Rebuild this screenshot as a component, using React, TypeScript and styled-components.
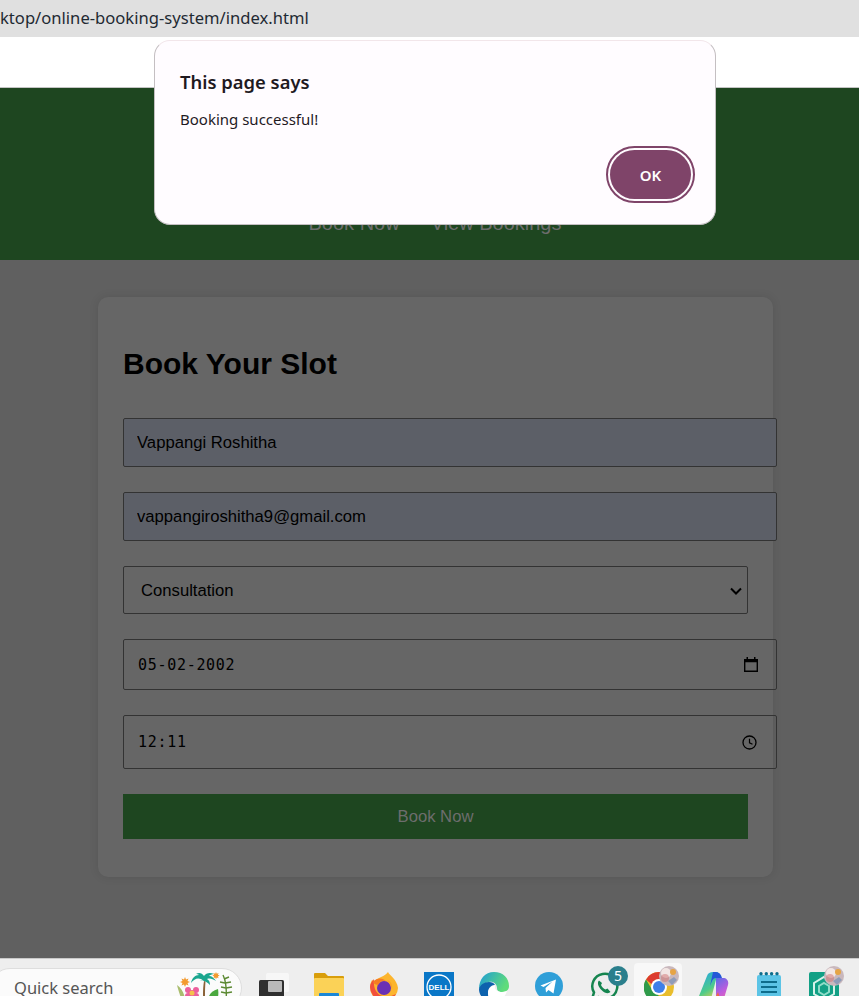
import React, { FC, ReactNode } from 'react';
import styled, { createGlobalStyle } from 'styled-components';

const GlobalStyle = createGlobalStyle`
  html, body {
    margin: 0;
    padding: 0;
    background: #606060;
  }
  * {
    box-sizing: border-box;
  }
`;

const Screen = styled.div`
  position: relative;
  width: 859px;
  height: 996px;
  overflow: hidden;
  display: flex;
  flex-direction: column;
  font-family: 'Liberation Sans', Arial, sans-serif;
`;

const AddressBar = styled.div`
  height: 37px;
  flex: none;
  background: #e0e0e0;
  color: #1f2a33;
  font: 16.6px/35px 'Noto Sans', 'Open Sans', sans-serif;
  white-space: nowrap;
`;

const TopStrip = styled.div`
  height: 51px;
  flex: none;
  background: #fff;
  border-bottom: 1px solid #c4c4c4;
`;

const Header = styled.header`
  height: 172px;
  flex: none;
  background: #1e4620;
  display: flex;
  justify-content: center;
  align-items: flex-end;
  gap: 31px;
  padding: 0 0 25px 11px;
`;

const NavLink = styled.a`
  color: #6d6d6d;
  font-size: 20px;
  line-height: 23px;
  text-decoration: none;
`;

const Main = styled.main`
  flex: 1;
  min-height: 0;
  background: #606060;
  padding: 37px 0 0 98px;
`;

const Card = styled.section`
  width: 675px;
  height: 580px;
  background: #666;
  border-radius: 10px;
  box-shadow: 0 0 10px rgba(0, 0, 0, 0.1);
  padding: 49px 25px 0;
`;

const Title = styled.h2`
  margin: 0 0 37px;
  color: #000;
  font-size: 30px;
  line-height: 35px;
  font-weight: 700;
`;

const Form = styled.form`
  display: flex;
  flex-direction: column;
  gap: 25px;
`;

const TextField = styled.input<{ $autofill?: boolean }>`
  display: block;
  width: 654px;
  height: 49px;
  padding: 0 13px;
  border: 1px solid #333;
  border-radius: 2px;
  outline: none;
  background: ${p => (p.$autofill ? '#5c5f67' : '#666')};
  color: #000;
  font: 16.67px 'Liberation Sans', Arial, sans-serif;
`;

const SelectBox = styled.div`
  width: 625px;
  height: 48px;
  padding: 1px 5px 0 17px;
  border: 1px solid #333;
  border-radius: 2px;
  display: flex;
  align-items: center;
  justify-content: space-between;
  color: #000;
  font-size: 16.67px;
`;

const PickerField = styled.div<{ $height: number; $iconGap: number }>`
  width: 654px;
  height: ${p => p.$height}px;
  padding: 0 ${p => p.$iconGap}px 0 14px;
  border: 1px solid #333;
  border-radius: 2px;
  display: flex;
  align-items: center;
  justify-content: space-between;
  color: #000;
  font: 15px 'DejaVu Sans Mono', 'Liberation Mono', monospace;
  letter-spacing: 0.7px;
`;

const SubmitButton = styled.button`
  width: 625px;
  height: 45px;
  border: none;
  background: #1e4620;
  color: #6d6d6d;
  font: 16.67px 'Liberation Sans', Arial, sans-serif;
  padding: 0;
`;

const Dialog = styled.div`
  position: absolute;
  left: 154px;
  top: 40px;
  width: 562px;
  height: 185px;
  background: #fffcff;
  border: 1px solid #f2e6ea;
  border-bottom-color: #c4bfc2;
  border-right-color: #c4bfc2;
  border-left-color: #c4bfc2;
  border-radius: 16px;
  padding: 29px 25px 0;
  font-family: 'Noto Sans', 'Open Sans', sans-serif;
  color: #1f1a1f;
`;

const DialogTitle = styled.div`
  font-size: 18.4px;
  line-height: 24px;
  font-weight: 600;
`;

const DialogText = styled.div`
  margin-top: 15px;
  font-size: 15px;
  line-height: 20px;
`;

const DialogActions = styled.div`
  position: absolute;
  right: 24px;
  bottom: 25px;
`;

const OkButton = styled.button`
  display: block;
  width: 81px;
  height: 49px;
  border: none;
  border-radius: 25px;
  background: #7f4469;
  outline: 2px solid #7f4469;
  outline-offset: 2px;
  color: #fff;
  font: 600 15px 'Noto Sans', 'Open Sans', sans-serif;
  padding: 0;
`;

const Taskbar = styled.footer`
  height: 38px;
  flex: none;
  background: #eeeeee;
  border-top: 1px solid #c9c9c9;
  display: flex;
  overflow: hidden;
`;

const SearchPill = styled.div`
  width: 252px;
  height: 40px;
  flex: none;
  margin: 9px 4px 0 -10px;
  padding: 7px 0 0 23px;
  background: #fbfbfb;
  border: 1px solid #dedede;
  border-radius: 20px;
  display: flex;
  justify-content: space-between;
  color: #555;
  font: 16.5px/24px 'Noto Sans', 'Open Sans', sans-serif;
`;

const Tile = styled.div<{ $active?: boolean }>`
  position: relative;
  width: 55px;
  flex: none;
  height: 45px;
  display: flex;
  justify-content: center;
  padding-top: 13px;
  &::before {
    content: '';
    display: ${p => (p.$active ? 'block' : 'none')};
    position: absolute;
    left: 3px;
    right: 4px;
    top: 4px;
    bottom: 0;
    background: #f8f8f8;
    border-radius: 4px;
  }
  svg {
    position: relative;
  }
`;

const Badge = styled.span`
  position: absolute;
  left: 32px;
  top: 7px;
  width: 20px;
  height: 20px;
  border-radius: 50%;
  background: #2b7f8c;
  color: #fff;
  font: 14px/20px 'Noto Sans', sans-serif;
  text-align: center;
`;

const DotHolder = styled.span`
  position: absolute;
  left: 28px;
  top: 7px;
  width: 20px;
  height: 20px;
  line-height: 0;
`;

const ArtHolder = styled.span`
  flex: none;
  margin: -4px 6px 0 0;
  line-height: 0;
`;

const Chevron: FC = () => (
  <svg width="12" height="8" viewBox="0 0 12 8">
    <path d="M1 1.500 6 6.500l5-5" fill="none" stroke="#000" strokeWidth="2" />
  </svg>
);

const CalendarIcon: FC = () => (
  <svg width="14" height="15" viewBox="0 0 14 15">
    <path d="M2.500 0h1.500v2h6V0h1.500v2H14v13H0V2h2.500z M1.400 5.200v8.400h11.200V5.200z" fill="#000" fillRule="evenodd" />
  </svg>
);

const ClockIcon: FC = () => (
  <svg width="15" height="15" viewBox="0 0 15 15">
    <circle cx="7.500" cy="7.500" r="6.500" fill="none" stroke="#000" strokeWidth="1.300" />
    <path d="M7.500 3.800v4l3 1.500" fill="none" stroke="#000" strokeWidth="1.200" />
  </svg>
);

const IslandArt: FC = () => (
  <svg width="60" height="30" viewBox="0 0 60 30">
    <path d="M2 13c4 3 7 7 8 14H6C5 22 3 18 2 13z" fill="#a9bd6e" />
    <path d="M28 27c0-7 0-12 1-18l1.500.5c-.5 6-.5 11-.5 17.500z" fill="#8a6238" />
    <path d="M29 9C24 5 20 6 16 11c1-5 4-8 8-8-1-1-2-1-3-1 3-2 6-1 8 2 2-3 6-4 10-2-2 0-4 1-5 2 3 0 5 2 7 5-3-2-6-3-9-2 2 1 3 3 3 6-3-3-6-5-10-4z" fill="#1ba78f" />
    <path d="M33 30c0-7 3-11 10-13 1 6 0 11-4 13z" fill="#4aa83e" />
    <g fill="none" stroke="#5c8a33" strokeWidth="1.400">
      <path d="M48 3c3 6 4 14 3 27" />
      <path d="M49 7l5-2M50 11l-5-1M50 11l6-1M51 16l-5-1M51 16l6-1M51 21l-5-1M51 21l6-1" />
    </g>
    <circle cx="13" cy="18" r="3" fill="#ec5f9c" />
    <circle cx="21" cy="18" r="3" fill="#ec5f9c" />
    <circle cx="13" cy="24" r="3" fill="#ec5f9c" />
    <circle cx="21" cy="24" r="3" fill="#ec5f9c" />
    <rect x="13" y="18" width="8" height="6" fill="#ec5f9c" />
    <circle cx="17" cy="21" r="2.500" fill="#f4c24c" />
    <path d="M10 5l1 2.500 2.500-1-1 2.500 2.500 1-2.500 1 1 2.500-2.500-1-1 2.500-1-2.500-2.500 1 1-2.500-2.500-1 2.500-1-1-2.500 2.500 1z" fill="#f39a2e" />
    <path d="M41 0l.8 1.700 1.800-.7-.7 1.800 1.700.8-1.700.8.7 1.800-1.800-.7-.8 1.700-.8-1.700-1.800.7.7-1.800-1.700-.8 1.700-.8-.7-1.800 1.800.7z" fill="#f39a2e" />
  </svg>
);

const TaskViewIcon: FC = () => (
  <svg width="30" height="30" viewBox="0 0 30 30">
    <rect x="7" y="1" width="23" height="19" rx="1.500" fill="#f7f7f7" />
    <rect x="0" y="8" width="25" height="22" rx="1.500" fill="#2f2f2f" />
    <rect x="9" y="9" width="14" height="11" rx="1" fill="#b9b9b9" />
  </svg>
);

const FolderIcon: FC = () => (
  <svg width="30" height="30" viewBox="0 0 30 30">
    <path d="M0 2a1 1 0 0 1 1-1h10l3 3h15a1 1 0 0 1 1 1v4H0z" fill="#d99e0b" />
    <rect x="0" y="6" width="30" height="24" rx="1" fill="#fbd257" />
    <rect x="5" y="21" width="20" height="9" rx="1" fill="#1b87d6" />
  </svg>
);

const FirefoxIcon: FC = () => (
  <svg width="30" height="30" viewBox="0 0 30 30">
    <path d="M19 0c1 3 9 7 10 16a14 14 0 1 1-28-1c0-3 1-5 2-7 1 1 2 1 4 0 3-3 8-3 12-8z" fill="#fcb52e" />
    <path d="M1 15a14 14 0 0 0 26 7c-4 2-9 4-14 2C7 22 4 15 5 7 3 9 1 12 1 15z" fill="#f2503c" />
    <circle cx="15" cy="16" r="7" fill="#6a30b4" />
    <path d="M4 10c4-5 10-4 13-1-3-1-6 0-7 3-2 2-5 0-6-2z" fill="#f57d22" />
    <path d="M18 8c4 1 6 5 5 9-1-3-3-6-5-9z" fill="#f9a22a" />
  </svg>
);

const DellIcon: FC = () => (
  <svg width="30" height="30" viewBox="0 0 30 30">
    <rect width="30" height="30" fill="#0a77c7" />
    <circle cx="15" cy="15" r="12" fill="none" stroke="#fff" strokeWidth="1.300" />
    <text x="15" y="18" fill="#fff" fontSize="8" fontWeight="700" fontFamily="Liberation Sans" textAnchor="middle">DELL</text>
  </svg>
);

const EdgeIcon: FC = () => (
  <svg width="30" height="30" viewBox="0 0 30 30">
    <defs>
      <linearGradient id="edgeTop" x1="0" y1="0" x2="1" y2="0.400">
        <stop offset="0" stopColor="#1e9bd8" />
        <stop offset="1" stopColor="#5fdc7a" />
      </linearGradient>
    </defs>
    <path d="M15 0c9 0 15 6 15 14 0 4-3 6-7 6-3 0-5-1-5-4 0-4-4-7-8-6-5 1-8 4-10 7C0 7 6 0 15 0z" fill="url(#edgeTop)" />
    <path d="M0 17c1-4 5-7 10-7 3 0 5 1 6 3-4 0-7 3-7 8 0 4 2 7 6 9H13C6 30 0 24 0 17z" fill="#0d62ad" />
    <path d="M9 21c0-4 3-7 7-8-1 4 2 7 7 7 2 0 4-1 5-1-2 7-8 11-13 11-4-2-6-5-6-9z" fill="#ffffff" />
  </svg>
);

const TelegramIcon: FC = () => (
  <svg width="28" height="28" viewBox="0 0 28 28">
    <circle cx="14" cy="14" r="14" fill="#2f9fd8" />
    <path d="M5.500 13.500 21 7.500l-2.500 14-5-3.500-2.500 2.500-.5-4.500 7-6.500-9 5.500z" fill="#fff" />
  </svg>
);

const WhatsappIcon: FC = () => (
  <svg width="30" height="30" viewBox="0 0 30 30">
    <path d="M3 27l2-6.500A12.500 12.500 0 1 1 9.500 25z" fill="none" stroke="#15854f" strokeWidth="2.500" />
    <path d="M10 8.500c-2 2-1 6 2.500 9.500s7 4 9 2l-3-3.500-2 1c-2-1-3.500-2.500-4.500-4.500l1-2z" fill="#15854f" />
  </svg>
);

const ChromeIcon: FC = () => (
  <svg width="30" height="30" viewBox="0 0 30 30">
    <circle cx="15" cy="15" r="15" fill="#e9bd2c" />
    <path d="M15 0a15 15 0 0 1 13 7.500H15a7.500 7.500 0 0 0-7 5L2 7.500A15 15 0 0 1 15 0z" fill="#dc3b2e" />
    <path d="M2 7.500l6.500 11a7.500 7.500 0 0 0 6.500 4L11 30A15 15 0 0 1 2 7.500z" fill="#2f9a4a" />
    <circle cx="15" cy="15" r="8" fill="#fff" />
    <circle cx="15" cy="15" r="6" fill="#3f7fe8" />
  </svg>
);

const ProfileDot: FC = () => (
  <DotHolder>
    <svg width="20" height="20" viewBox="0 0 20 20">
      <circle cx="10" cy="10" r="10" fill="#c9b8bd" />
      <circle cx="7" cy="7" r="5" fill="#f2e6e4" />
      <circle cx="6" cy="12" r="4" fill="#cf6f6f" opacity="0.500" />
      <circle cx="14" cy="6" r="3" fill="#e6a445" />
      <path d="M9 15l6-4 3 3-5 5z" fill="#8f9cb8" />
    </svg>
  </DotHolder>
);

const CopilotIcon: FC = () => (
  <svg width="30" height="30" viewBox="0 0 30 30">
    <defs>
      <linearGradient id="cpA" x1="0.200" y1="0" x2="0.600" y2="1">
        <stop offset="0" stopColor="#27a8e0" />
        <stop offset="0.600" stopColor="#4ecb8a" />
        <stop offset="1" stopColor="#e8d04a" />
      </linearGradient>
      <linearGradient id="cpB" x1="0.300" y1="0" x2="0.800" y2="1">
        <stop offset="0" stopColor="#5a6ce8" />
        <stop offset="0.600" stopColor="#c05cdc" />
        <stop offset="1" stopColor="#ee6aa8" />
      </linearGradient>
      <linearGradient id="cpC" x1="0" y1="0" x2="1" y2="0">
        <stop offset="0" stopColor="#f6c544" />
        <stop offset="1" stopColor="#ee5a4a" />
      </linearGradient>
    </defs>
    <path d="M8 4c1-3 3-4 6-4h5l-7 27c-1 2-3 3-5 3H4c-3 0-5-3-4-6z" fill="url(#cpA)" />
    <path d="M17 6h7c4 0 6 3 5 7l-3 10c-1 4-4 7-8 7h-6c2-1 4-3 5-6z" fill="url(#cpB)" />
    <path d="M14 0h3c3 0 5 2 6 6h-6c-2 0-3 1-4 3l-2 5z" fill="#2458d8" />
    <path d="M6 30h10c3 0 4-2 5-4l-2-6-2 4c-1 3-3 4-5 4H8z" fill="url(#cpC)" />
  </svg>
);

const NotepadIcon: FC = () => (
  <svg width="24" height="30" viewBox="0 0 24 30">
    <rect y="3" width="24" height="27" rx="2" fill="#5cc4e6" />
    <g fill="#0d6d8c">
      <circle cx="4" cy="1.800" r="1.700" />
      <circle cx="9.300" cy="1.800" r="1.700" />
      <circle cx="14.600" cy="1.800" r="1.700" />
      <circle cx="20" cy="1.800" r="1.700" />
      <rect x="4" y="9" width="16" height="2" />
      <rect x="4" y="14" width="16" height="2" />
      <rect x="4" y="19" width="16" height="2" />
      <rect x="4" y="24" width="11" height="2" />
    </g>
  </svg>
);

const HexAppIcon: FC = () => (
  <svg width="30" height="30" viewBox="0 0 30 30">
    <rect width="30" height="30" rx="2" fill="#12a085" />
    <path d="M15 5l10 6v11l-10 6-10-6V11z" fill="none" stroke="#d8f2ea" strokeWidth="2" />
    <path d="M15 11l5 3v6l-5 3-5-3v-6z" fill="none" stroke="#8fdcc8" strokeWidth="2" />
  </svg>
);

type PickerProps = {
  value: string;
  height: number;
  iconGap: number;
  icon: ReactNode;
};

const Picker: FC<PickerProps> = ({ value, height, iconGap, icon }) => (
  <PickerField $height={height} $iconGap={iconGap}>
    <span>{value}</span>
    {icon}
  </PickerField>
);

export default function App() {
  return (
    <Screen>
      <GlobalStyle />
      <AddressBar>ktop/online-booking-system/index.html</AddressBar>
      <TopStrip />
      <Header>
        <NavLink href="#book">Book Now</NavLink>
        <NavLink href="#bookings">View Bookings</NavLink>
      </Header>
      <Main>
        <Card>
          <Title>Book Your Slot</Title>
          <Form onSubmit={e => e.preventDefault()}>
            <TextField $autofill readOnly value="Vappangi Roshitha" />
            <TextField $autofill readOnly value="vappangiroshitha9@gmail.com" />
            <SelectBox>
              <span>Consultation</span>
              <Chevron />
            </SelectBox>
            <Picker value="05-02-2002" height={51} iconGap={18} icon={<CalendarIcon />} />
            <Picker value="12:11" height={54} iconGap={19} icon={<ClockIcon />} />
            <SubmitButton type="submit">Book Now</SubmitButton>
          </Form>
        </Card>
      </Main>
      <Taskbar>
        <SearchPill>
          <span>Quick search</span>
          <ArtHolder>
            <IslandArt />
          </ArtHolder>
        </SearchPill>
        <Tile><TaskViewIcon /></Tile>
        <Tile><FolderIcon /></Tile>
        <Tile><FirefoxIcon /></Tile>
        <Tile><DellIcon /></Tile>
        <Tile><EdgeIcon /></Tile>
        <Tile><TelegramIcon /></Tile>
        <Tile>
          <WhatsappIcon />
          <Badge>5</Badge>
        </Tile>
        <Tile $active>
          <ChromeIcon />
          <ProfileDot />
        </Tile>
        <Tile><CopilotIcon /></Tile>
        <Tile><NotepadIcon /></Tile>
        <Tile>
          <HexAppIcon />
          <ProfileDot />
        </Tile>
      </Taskbar>
      <Dialog role="alertdialog">
        <DialogTitle>This page says</DialogTitle>
        <DialogText>Booking successful!</DialogText>
        <DialogActions>
          <OkButton type="button">OK</OkButton>
        </DialogActions>
      </Dialog>
    </Screen>
  );
}
